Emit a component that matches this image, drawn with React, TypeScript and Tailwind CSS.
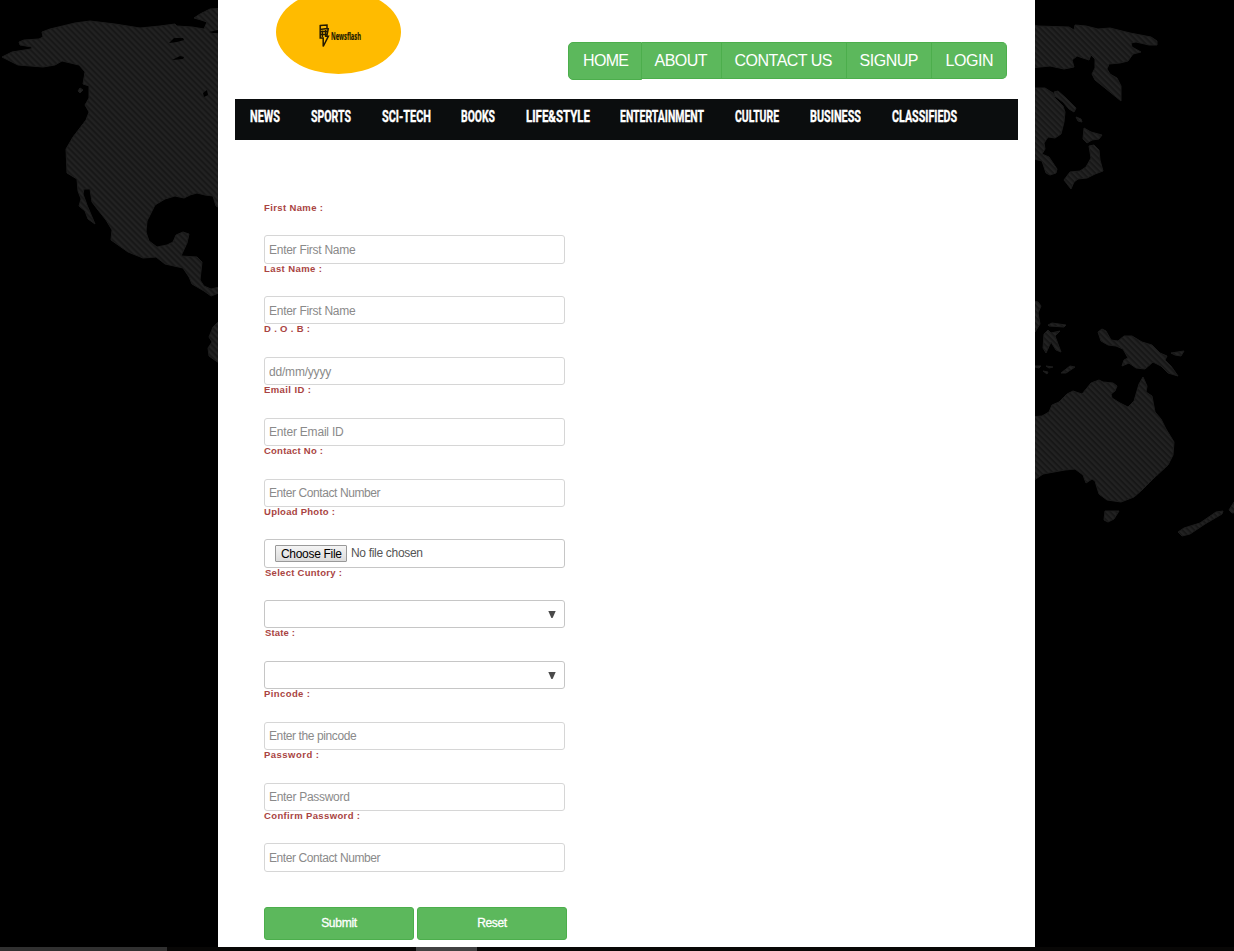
import { useLayoutEffect, useRef, useState } from "react";

type FitProps = { text: string; width: number; mode?: "scale" | "space"; className?: string };

/** Sets a line of text to an exact width, by narrowing the glyphs or by tracking. */
function Fit({ text, width, mode = "space", className = "" }: FitProps) {
  const ref = useRef<HTMLSpanElement>(null);
  const [natural, setNatural] = useState(0);
  useLayoutEffect(() => {
    if (ref.current) setNatural(ref.current.getBoundingClientRect().width);
  }, []);
  const style = !natural
    ? {}
    : mode === "scale"
      ? { transform: `scaleX(${width / natural})` }
      : { letterSpacing: `${(width - natural) / (text.length - 1)}px` };
  return (
    <span className="inline-block shrink-0 whitespace-nowrap" style={{ width }}>
      <span ref={ref} className={`inline-block origin-left whitespace-nowrap ${className}`} style={style}>
        {text}
      </span>
    </span>
  );
}

const land = [
  "M2 57L12 52L31 49L32 47L20 45L19 42L24 40L39 39L43 37L42 32L50 29L75 23L90 21L115 24L140 28L160 26L175 24L177 26L192 27L204 29L207 22L201 20L194 18L200 14L210 9L224 8V210L216 206L213 196L205 195L197 193L190 195L184 198L175 196L165 199L155 205L152 211L147 221L146 232L149 241L157 247L167 245L173 242L176 235L183 232L189 234L187 243L181 256L197 257L202 262L200 280L204 286L211 289L224 286V291L211 296L204 291L192 284L189 277L183 268L165 264L156 257L143 258L128 252L111 240L112 230L106 220L98 210L92 202L90 189L84 189L83 194L87 205L95 224L88 219L85 211L79 206L81 199L78 191L77 179L67 173L66 149L73 137L86 120L89 112L85 105L89 98L89 86L83 84L85 72L79 65L62 61L55 65L43 67L18 65L10 61Z",
  "M78 91L80 88L83 90L80 93Z",
  "M224 318L218 322L213 327L209 337L212 342L208 348L209 356L216 361L224 366Z",
  "M1030 24L1038 26L1069 27L1074 30L1075 25L1086 26L1098 29L1110 28L1130 33L1151 37L1157 41L1157 45L1149 45L1136 42L1131 43L1132 47L1141 52L1133 54L1128 61L1120 63L1109 64L1107 69L1110 74L1117 78L1121 86L1121 101L1105 88L1095 80L1092 74L1095 68L1095 59L1091 55L1089 60L1077 56L1072 60L1074 67L1064 69L1050 66L1030 68Z",
  "M1030 88L1045 88L1053 93L1055 98L1063 106L1065 112L1064 122L1061 134L1055 138L1048 137L1044 143L1045 149L1042 154L1049 157L1057 169L1056 173L1050 175L1046 173L1042 161L1030 158Z",
  "M1054 92L1058 91L1066 98L1076 108L1074 112L1069 109L1063 102L1055 96Z",
  "M1076 117L1081 119L1082 122L1078 121Z",
  "M1084 128L1091 132L1102 135L1099 139L1092 140L1087 143L1083 139Z",
  "M1089 146L1094 145L1099 150L1100 160L1103 171L1095 174L1087 178L1078 179L1074 182L1071 189L1064 180L1070 172L1080 171L1086 167L1091 158Z",
  "M1030 300L1038 302L1041 306L1038 313L1040 324L1035 332L1030 330Z",
  "M1048 325L1052 323L1066 325L1064 327L1049 326Z",
  "M1044 334L1048 330L1051 333L1060 331L1055 336L1061 352L1056 350L1051 342L1046 353L1043 348Z",
  "M1035 366L1041 366L1039 368L1035 367ZM1046 366L1053 367L1049 368ZM1043 371L1048 372L1047 374ZM1061 373L1070 366L1075 367L1066 373Z",
  "M1098 332L1102 329L1106 331L1111 340L1118 341L1124 336L1132 336L1142 342L1152 345L1160 353L1167 356L1165 360L1171 366L1178 376L1168 373L1161 366L1153 362L1145 369L1136 368L1129 363L1122 366L1124 360L1128 358L1123 349L1116 346L1108 345L1101 341Z",
  "M1171 353L1184 351L1181 356L1175 355Z",
  "M1030 417L1042 416L1049 412L1052 405L1059 402L1067 394L1073 391L1082 394L1087 388L1091 383L1099 380L1103 382L1113 383L1117 386L1115 391L1111 394L1112 398L1120 403L1128 407L1134 401L1139 384L1143 377L1147 386L1146 392L1152 396L1155 412L1161 419L1166 429L1174 442L1173 455L1168 465L1154 478L1142 490L1134 497L1121 502L1107 500L1099 494L1095 481L1092 479L1086 483L1083 475L1075 469L1065 470L1043 474L1030 483Z",
  "M1105 511L1119 511L1114 519L1108 522L1104 520Z",
  "M1178 532L1184 528L1200 523L1216 512L1223 511L1222 514L1205 524L1190 534L1182 536Z",
  "M1229 510L1234 502L1240 500V512L1232 513Z",
];

const lakes = "M169 43L174 38L183 38L184 40L177 42ZM172 60L180 56L184 57L183 59ZM203 93L207 90L208 95L204 97ZM209 32L218 30V33L213 33Z";

function WorldMap() {
  return (
    <svg className="absolute inset-0 h-[951px] w-[1234px]" viewBox="0 0 1234 951" aria-hidden="true">
      <defs>
        <pattern id="stripes" width="4.24" height="4.24" patternUnits="userSpaceOnUse" patternTransform="rotate(45)">
          <rect width="4.24" height="4.24" fill="#222222" />
          <rect width="4.24" height="2" fill="#171717" />
        </pattern>
      </defs>
      {land.map((d) => (
        <path key={d} d={d} fill="url(#stripes)" stroke="#1c1c1c" strokeWidth="1" strokeLinejoin="round" />
      ))}
      <path d={lakes} fill="#000" />
    </svg>
  );
}

const sections = [
  { text: "NEWS", width: 30, cell: "w-[61px]" },
  { text: "SPORTS", width: 40, cell: "w-[71px]" },
  { text: "SCI-TECH", width: 49, cell: "w-[79px]" },
  { text: "BOOKS", width: 34, cell: "w-[65px]" },
  { text: "LIFE&STYLE", width: 64, cell: "w-[94px]" },
  { text: "ENTERTAINMENT", width: 84, cell: "w-[115px]" },
  { text: "CULTURE", width: 44, cell: "w-[75px]" },
  { text: "BUSINESS", width: 51, cell: "w-[82px]" },
  { text: "CLASSIFIEDS", width: 65, cell: "w-[66px]" },
];

const pages = [
  { text: "HOME", width: 46, cell: "h-[38px] w-[74px] rounded-l-[5px] pl-[14px]" },
  { text: "ABOUT", width: 53, cell: "h-[37px] w-[80px] pl-[12.5px] border-l-0" },
  { text: "CONTACT US", width: 98, cell: "h-[37px] w-[125px] pl-[12.5px] border-l-0" },
  { text: "SIGNUP", width: 59, cell: "h-[37px] w-[85px] pl-[12.5px] border-l-0" },
  { text: "LOGIN", width: 48, cell: "h-[37px] w-[75px] rounded-r-[5px] pl-[13.5px] border-l-0" },
];

type Field = {
  label: string;
  width: number;
  kind: "text" | "file" | "select";
  hint?: string;
  style?: string;
};

const fields: Field[] = [
  { label: "First Name :", width: 59, kind: "text", hint: "Enter First Name", style: "tracking-[-0.27px] pt-[2px]" },
  { label: "Last Name :", width: 58, kind: "text", hint: "Enter First Name", style: "tracking-[-0.27px] pt-[2px]" },
  { label: "D . O . B :", width: 46, kind: "text", hint: "dd/mm/yyyy", style: "tracking-[-0.2px] pt-[2px]" },
  { label: "Email ID :", width: 47, kind: "text", hint: "Enter Email ID", style: "tracking-[-0.2px]" },
  { label: "Contact No :", width: 59, kind: "text", hint: "Enter Contact Number", style: "tracking-[-0.41px]" },
  { label: "Upload Photo :", width: 71, kind: "file" },
  { label: "Select Cuntory :", width: 77, kind: "select" },
  { label: "State :", width: 30, kind: "select" },
  { label: "Pincode :", width: 46, kind: "text", hint: "Enter the pincode", style: "tracking-[-0.4px]" },
  { label: "Password :", width: 55, kind: "text", hint: "Enter Password", style: "tracking-[-0.3px]" },
  { label: "Confirm Password :", width: 96, kind: "text", hint: "Enter Contact Number", style: "tracking-[-0.41px]" },
];

function Control({ field }: { field: Field }) {
  if (field.kind === "file") {
    return (
      <div className="flex h-[28.3px] w-[301px] items-center rounded-[3px] border border-[#c6c6c6] pl-[10px] text-[12px]">
        <button className="h-[17px] w-[72px] rounded-[1px] border border-[#999] bg-linear-to-b from-[#f4f4f4] to-[#dcdcdc] pl-[5px] text-left leading-[16px] text-black">
          <Fit text="Choose File" width={61} />
        </button>
        <span className="-mt-[1px] ml-[4px] text-[#555]">
          <Fit text="No file chosen" width={72} />
        </span>
      </div>
    );
  }
  if (field.kind === "select") {
    return (
      <div className="flex h-[28.3px] w-[301px] items-center justify-end rounded-[3px] border border-[#c6c6c6] pr-[8px]">
        <svg className="h-[7px] w-[8px]" viewBox="0 0 8 7">
          <path d="M0.3 0H7.7L4.6 7H3.4Z" fill="#4a4a4a" />
        </svg>
      </div>
    );
  }
  return (
    <div className="flex h-[28.3px] w-[301px] items-center rounded-[3px] border border-[#d6d6d6] pl-[4px]">
      <input
        className={`h-[24px] w-[280px] text-[12px] outline-none placeholder:text-[#8a8a8a] ${field.style}`}
        placeholder={field.hint}
      />
    </div>
  );
}

function Logo() {
  return (
    <div className="-mt-[10px] ml-[58px] flex h-[84px] w-[125px] items-center rounded-[50%] bg-[#ffbb00] pt-[7px] pl-[43px]">
      <svg className="h-[24px] w-[11px]" viewBox="0 0 11 24" fill="none" stroke="#241a00" strokeWidth="1.5">
        <path d="M1.2 1.6L8 1V4.6L1.2 5.4ZM1.2 5V14H4.2V22.5L9.4 12.2H7.8L9.4 4" />
        <path d="M1 7.6H8M1 10.6H8M3.4 6.5V13M6.6 6V13" strokeWidth="1.5" />
      </svg>
      <span className="ml-[1px] font-['Open_Sans'] text-[10px] leading-[12px] font-bold text-[#241a00] [-webkit-text-stroke:0.2px_#241a00]">
        <Fit text="Newsflash" width={30} mode="scale" />
      </span>
    </div>
  );
}

export default function App() {
  return (
    <div className="relative h-[951px] w-[1234px] overflow-hidden bg-black font-['Liberation_Sans',Arial,sans-serif]">
      <WorldMap />
      <div className="relative ml-[218px] flex h-[947px] w-[817px] flex-col bg-white">
        <header className="flex h-[99px] shrink-0 items-start justify-between pr-[28px]">
          <Logo />
          <nav className="mt-[42px] flex items-start text-[16px] leading-[35px] text-white">
            {pages.map((p) => (
              <a key={p.text} className={`border border-[#4cae4c] bg-[#5cb85c] ${p.cell}`}>
                <Fit text={p.text} width={p.width} />
              </a>
            ))}
          </nav>
        </header>
        <nav className="ml-[17px] flex h-[41px] w-[783px] shrink-0 bg-[#0b0d0e] pt-[7px] pl-[15px] font-[Roboto] text-[17px] leading-[20px] font-bold text-white [-webkit-text-stroke:0.4px_white]">
          {sections.map((s) => (
            <a key={s.text} className={`shrink-0 ${s.cell}`}>
              <Fit text={s.text} width={s.width} mode="scale" />
            </a>
          ))}
        </nav>
        <form className="mt-[62.75px] ml-[46px]" onSubmit={(e) => e.preventDefault()}>
          {fields.map((f) => (
            <div key={f.label} className="h-[60.82px]">
              <label
                className={`flex h-[32.52px] items-start text-[9.5px] leading-[9px] font-bold text-[#a94442] ${f.kind === "select" ? "pl-[1px]" : ""}`}
              >
                <Fit text={f.label} width={f.width} />
              </label>
              <Control field={f} />
            </div>
          ))}
          <div className="mt-[35.2px] flex gap-[3px] text-[12px] leading-[31px] text-white">
            <button className="h-[33px] w-[150px] rounded-[3px] border border-[#4cae4c] bg-[#5cb85c] [-webkit-text-stroke:0.3px_white]">
              <Fit text="Submit" width={36} />
            </button>
            <button className="h-[33px] w-[150px] rounded-[3px] border border-[#4cae4c] bg-[#5cb85c] [-webkit-text-stroke:0.3px_white]">
              <Fit text="Reset" width={30} />
            </button>
          </div>
        </form>
      </div>
      <div className="relative flex h-[4px] w-full bg-[#080706]">
        <div className="w-[167px] bg-[#303030]" />
        <div className="ml-[249px] w-[61px] bg-[#424242]" />
      </div>
    </div>
  );
}
